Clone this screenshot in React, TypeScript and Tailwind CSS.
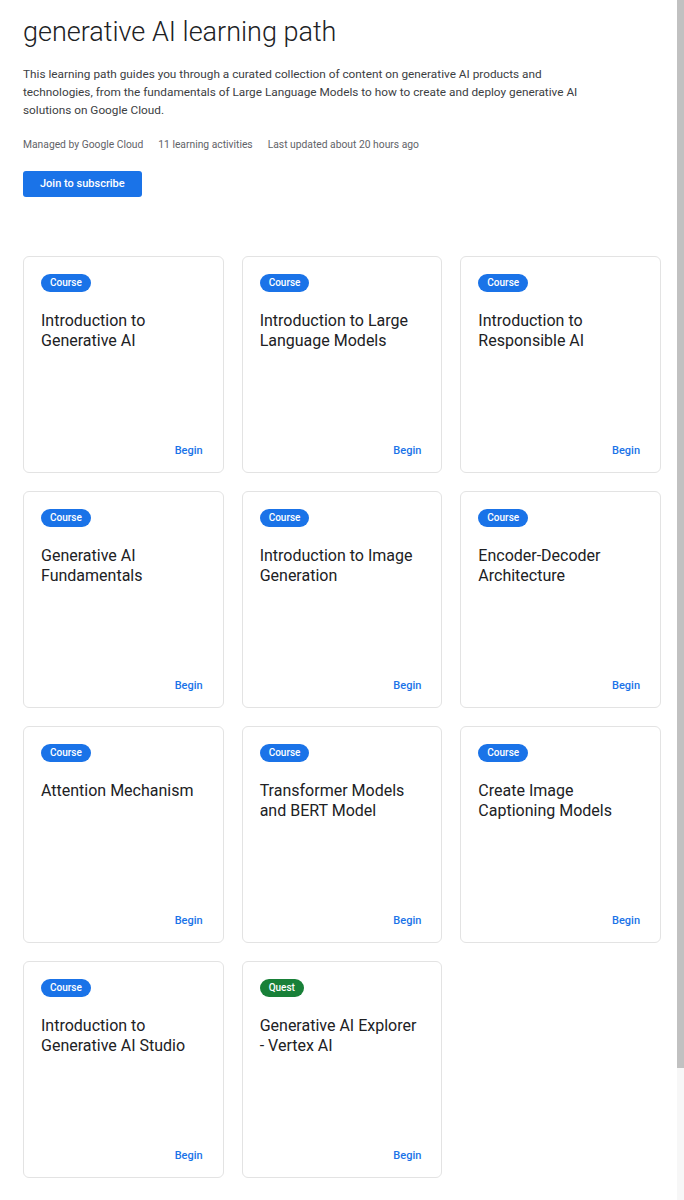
const items = [
  { kind: "Course", title: "Introduction to Generative AI" },
  { kind: "Course", title: "Introduction to Large Language Models" },
  { kind: "Course", title: "Introduction to Responsible AI" },
  { kind: "Course", title: "Generative AI Fundamentals" },
  { kind: "Course", title: "Introduction to Image Generation" },
  { kind: "Course", title: "Encoder-Decoder Architecture" },
  { kind: "Course", title: "Attention Mechanism" },
  { kind: "Course", title: "Transformer Models and BERT Model" },
  { kind: "Course", title: "Create Image Captioning Models" },
  { kind: "Course", title: "Introduction to Generative AI Studio" },
  { kind: "Quest", title: "Generative AI Explorer - Vertex AI" },
];

function ActivityCard({ kind, title }: { kind: string; title: string }) {
  const badge =
    kind === "Quest" ? "bg-[#188038]" : "bg-[#1a73e8]";
  return (
    <div className="flex h-[217px] flex-col rounded-[6px] border border-[#e3e3e3] bg-white pl-[17px] pr-[20px] pt-[17px] pb-[13px]">
      <div className="flex">
        <span
          className={`flex h-[18px] items-center rounded-full px-[9px] text-[10px] font-medium leading-none text-white ${badge}`}
        >
          {kind}
        </span>
      </div>
      <p className="mt-[19px] max-w-[160px] text-[16px] leading-[20px] text-[#202124]">
        {title}
      </p>
      <div className="mt-auto flex justify-end">
        <span className="text-[11px] font-medium text-[#1a73e8]">Begin</span>
      </div>
    </div>
  );
}

export default function App() {
  return (
    <div
      className="flex min-h-[1200px] bg-white"
      style={{ fontFamily: "Roboto, 'Noto Sans', sans-serif" }}
    >
      <main className="flex-1 pl-[23px] pr-[16px] pt-[14px] pb-[24px]">
        <h1 className="text-[27px] font-light leading-[36px] text-[#202124]">
          generative AI learning path
        </h1>
        <p className="mt-[15px] w-[580px] text-[11.8px] leading-[18px] text-[#3c4043]">
          This learning path guides you through a curated collection of content
          on generative AI products and technologies, from the fundamentals of
          Large Language Models to how to create and deploy generative AI
          solutions on Google Cloud.
        </p>
        <div className="mt-[19px] flex gap-[15px] text-[10.3px] leading-[14px] text-[#5f6368]">
          <span>Managed by Google Cloud</span>
          <span>11 learning activities</span>
          <span>Last updated about 20 hours ago</span>
        </div>
        <button className="mt-[19px] h-[26px] rounded-[3px] bg-[#1a73e8] px-[17px] text-[11px] font-medium text-white">
          Join to subscribe
        </button>
        <div className="mt-[59px] grid grid-cols-3 gap-x-[18px] gap-y-[18px]">
          {items.map((it) => (
            <ActivityCard key={it.title} kind={it.kind} title={it.title} />
          ))}
        </div>
      </main>
      <div className="w-[7px] bg-[#f7f7f7]">
        <div className="h-[1068px] bg-[#c1c1c1]" />
      </div>
    </div>
  );
}
